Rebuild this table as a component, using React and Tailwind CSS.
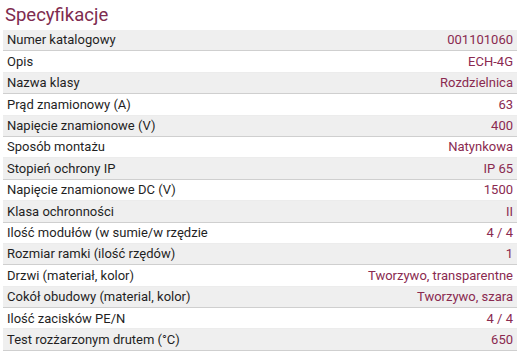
const rows = [
  ["Numer katalogowy", "001101060"],
  ["Opis", "ECH-4G"],
  ["Nazwa klasy", "Rozdzielnica"],
  ["Prąd znamionowy (A)", "63"],
  ["Napięcie znamionowe (V)", "400"],
  ["Sposób montażu", "Natynkowa"],
  ["Stopień ochrony IP", "IP 65"],
  ["Napięcie znamionowe DC (V)", "1500"],
  ["Klasa ochronności", "II"],
  ["Ilość modułów (w sumie/w rzędzie", "4 / 4"],
  ["Rozmiar ramki (ilość rzędów)", "1"],
  ["Drzwi (materiał, kolor)", "Tworzywo, transparentne"],
  ["Cokół obudowy (material, kolor)", "Tworzywo, szara"],
  ["Ilość zacisków PE/N", "4 / 4"],
  ["Test rozżarzonym drutem (°C)", "650"],
];

export default function App() {
  return (
    <div
      className="w-[520px] h-[360px] bg-white overflow-hidden"
      style={{ fontFamily: "Roboto, 'Liberation Sans', sans-serif" }}
    >
      <h2 className="px-[5px] pt-[3px] h-[30px] text-[18.5px] leading-[24px] text-[#7e2b4f]">
        Specyfikacje
      </h2>
      <div className="mx-[3px]">
        {rows.map(([label, value], i) => (
          <div
            key={label}
            className={
              "flex items-center justify-between h-[21.4px] pl-[4px] pr-[4px] text-[13px] border-b " +
              (i % 2 === 0
                ? "bg-[#efefef] border-[#cfcfcf]"
                : "bg-white border-[#ececec]")
            }
          >
            <span className="text-[#1f1f1f]">{label}</span>
            <span className="text-[#8a2a50]">{value}</span>
          </div>
        ))}
      </div>
    </div>
  );
}
